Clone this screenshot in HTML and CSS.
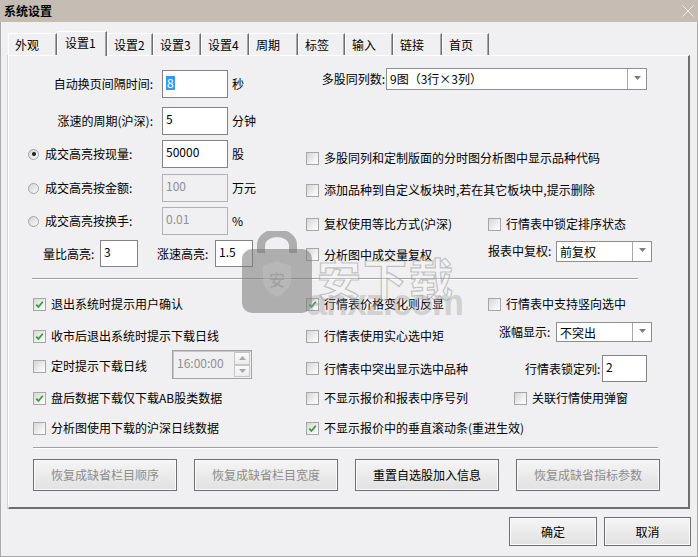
FILE: index.html
```html
<!DOCTYPE html>
<html lang="zh-CN">
<head>
<meta charset="utf-8">
<title>系统设置</title>
<link rel="stylesheet" href="styles.css">
</head>
<body>
<div class="window">
  <div class="titlebar">
    <span class="title">系统设置</span>
    <svg class="close" width="12" height="12" viewBox="0 0 12 12"><path d="M0.5 0.5 L11.5 11.5 M11.5 0.5 L0.5 11.5" stroke="#efebe6" stroke-width="1" fill="none"/></svg>
  </div>
  <div class="client">
    <div class="tabs">
      <div class="tab w49">外观</div>
      <div class="tab sel w50">设置1</div>
      <div class="tab w46">设置2</div>
      <div class="tab w48">设置3</div>
      <div class="tab w48">设置4</div>
      <div class="tab w49">周期</div>
      <div class="tab w47">标签</div>
      <div class="tab w48">输入</div>
      <div class="tab w49">链接</div>
      <div class="tab w47">首页</div>
    </div>
    <div class="panel">
      <div class="top">
        <div class="lcol">
          <div class="lrow r1">
            <div class="lab-r">自动换页间隔时间:</div>
            <div class="inp w66"><span class="hl">8</span></div>
            <div class="unit">秒</div>
          </div>
          <div class="lrow r2">
            <div class="lab-r">涨速的周期(沪深):</div>
            <div class="inp w66">5</div>
            <div class="unit">分钟</div>
          </div>
          <div class="lrow r3">
            <div class="lead"><span class="radio on"></span><span class="rlab">成交高亮按现量:</span></div>
            <div class="inp w66">50000</div>
            <div class="unit">股</div>
          </div>
          <div class="lrow r4">
            <div class="lead"><span class="radio"></span><span class="rlab">成交高亮按金额:</span></div>
            <div class="inp w66 dis">100</div>
            <div class="unit">万元</div>
          </div>
          <div class="lrow r5">
            <div class="lead"><span class="radio"></span><span class="rlab">成交高亮按换手:</span></div>
            <div class="inp w66 dis">0.01</div>
            <div class="unit">%</div>
          </div>
          <div class="lrow r6">
            <div class="lab6a">量比高亮:</div>
            <div class="inp w38">3</div>
            <div class="lab6b">涨速高亮:</div>
            <div class="inp w38">1.5</div>
          </div>
        </div>
        <div class="rcol">
          <div class="rrow q1">
            <div class="lab-q">多股同列数:</div>
            <div class="combo cw261"><span class="val">9图（3行×3列）</span><span class="arr"><svg width="7" height="5" viewBox="0 0 7 5"><path d="M0 0 H7 L3.5 4 Z" fill="#7e7e7e"/></svg></span></div>
          </div>
          <div class="rrow q2">
            <label class="cb"><span class="box"></span>多股同列和定制版面的分时图分析图中显示品种代码</label>
          </div>
          <div class="rrow q3">
            <label class="cb"><span class="box"></span>添加品种到自定义板块时,若在其它板块中,提示删除</label>
          </div>
          <div class="rrow q4">
            <div class="rc1"><label class="cb"><span class="box"></span>复权使用等比方式(沪深)</label></div>
            <div class="rc2"><label class="cb"><span class="box"></span>行情表中锁定排序状态</label></div>
          </div>
          <div class="rrow q5">
            <div class="rc1 low"><label class="cb"><span class="box"></span>分析图中成交量复权</label></div>
            <div class="rc2">
              <span class="lab-fq">报表中复权:</span>
              <div class="combo cw96 ch21"><span class="val">前复权</span><span class="arr"><svg width="7" height="5" viewBox="0 0 7 5"><path d="M0 0 H7 L3.5 4 Z" fill="#7e7e7e"/></svg></span></div>
            </div>
          </div>
        </div>
      </div>

      <div class="sep sep1"></div>

      <div class="lower">
        <div class="brow ra">
          <div class="c1"><label class="cb"><span class="box on"><svg width="11" height="11" viewBox="0 0 11 11"><path d="M2.3 5.6 L4.4 8 L8.8 2.8" stroke="#2e9b2e" stroke-width="1.7" fill="none"/></svg></span>退出系统时提示用户确认</label></div>
          <div class="c2"><label class="cb"><span class="box on"><svg width="11" height="11" viewBox="0 0 11 11"><path d="M2.3 5.6 L4.4 8 L8.8 2.8" stroke="#2e9b2e" stroke-width="1.7" fill="none"/></svg></span>行情表价格变化则反显</label></div>
          <div class="c3"><label class="cb"><span class="box"></span>行情表中支持竖向选中</label></div>
        </div>
        <div class="brow rb">
          <div class="c1"><label class="cb"><span class="box on"><svg width="11" height="11" viewBox="0 0 11 11"><path d="M2.3 5.6 L4.4 8 L8.8 2.8" stroke="#2e9b2e" stroke-width="1.7" fill="none"/></svg></span>收市后退出系统时提示下载日线</label></div>
          <div class="c2"><label class="cb"><span class="box"></span>行情表使用实心选中矩</label></div>
          <div class="c3 zf">
            <span class="lab-zf">涨幅显示:</span>
            <div class="combo cw96 ch20 up"><span class="val">不突出</span><span class="arr"><svg width="7" height="5" viewBox="0 0 7 5"><path d="M0 0 H7 L3.5 4 Z" fill="#7e7e7e"/></svg></span></div>
          </div>
        </div>
        <div class="brow rc">
          <div class="c1">
            <label class="cb wfix"><span class="box"></span>定时提示下载日线</label>
            <div class="spin">
              <span class="sv">16:00:00</span>
              <span class="sbtns">
                <span class="sb"><svg width="7" height="4" viewBox="0 0 7 4"><path d="M0 4 H7 L3.5 0 Z" fill="#a8a8a8"/></svg></span>
                <span class="sb"><svg width="7" height="4" viewBox="0 0 7 4"><path d="M0 0 H7 L3.5 4 Z" fill="#a8a8a8"/></svg></span>
              </span>
            </div>
          </div>
          <div class="c2 dn"><label class="cb"><span class="box"></span>行情表中突出显示选中品种</label></div>
          <div class="c3 lk">
            <span class="lab-lk">行情表锁定列:</span>
            <div class="inp w45 h27">2</div>
          </div>
        </div>
        <div class="brow rd">
          <div class="c1"><label class="cb"><span class="box on"><svg width="11" height="11" viewBox="0 0 11 11"><path d="M2.3 5.6 L4.4 8 L8.8 2.8" stroke="#2e9b2e" stroke-width="1.7" fill="none"/></svg></span>盘后数据下载仅下载AB股类数据</label></div>
          <div class="c2"><label class="cb"><span class="box"></span>不显示报价和报表中序号列</label></div>
          <div class="c3 gl"><label class="cb"><span class="box"></span>关联行情使用弹窗</label></div>
        </div>
        <div class="brow re">
          <div class="c1"><label class="cb"><span class="box"></span>分析图使用下载的沪深日线数据</label></div>
          <div class="c2"><label class="cb"><span class="box on"><svg width="11" height="11" viewBox="0 0 11 11"><path d="M2.3 5.6 L4.4 8 L8.8 2.8" stroke="#2e9b2e" stroke-width="1.7" fill="none"/></svg></span>不显示报价中的垂直滚动条(重进生效)</label></div>
        </div>
      </div>

      <div class="sep sep2"></div>

      <div class="btnrow">
        <div class="btn dis">恢复成缺省栏目顺序</div>
        <div class="btn dis">恢复成缺省栏目宽度</div>
        <div class="btn">重置自选股加入信息</div>
        <div class="btn dis">恢复成缺省指标参数</div>
      </div>
    </div>
    <div class="footer">
      <div class="fbtn w88">确定</div>
      <div class="fbtn w87">取消</div>
    </div>
  </div>

  <div class="watermark" aria-hidden="true">
    <svg class="bag" width="72" height="84" viewBox="0 0 72 84">
      <path d="M20 22 V14 A16 12 0 0 1 52 14 V22" stroke="rgba(120,120,120,0.55)" stroke-width="8" fill="none"/>
      <rect x="1" y="18" width="70" height="64" rx="10" fill="rgba(120,120,120,0.55)"/>
      <path d="M36 30 L50 35 V48 C50 57 43 63 36 66 C29 63 22 57 22 48 V35 Z" fill="rgba(200,200,200,0.35)"/>
      <text x="36" y="55" font-size="16" text-anchor="middle" fill="rgba(140,140,140,0.6)" font-family="Noto Sans CJK SC, sans-serif">安</text>
    </svg>
    <span class="wm-cn">安下载</span>
    <span class="wm-en">anxz.com</span>
  </div>
</div>
</body>
</html>
```

FILE: styles.css
```css
* { box-sizing: border-box; }

body {
  margin: 0;
  font-family: "Noto Sans CJK SC", "Noto Sans", sans-serif;
  font-size: 12px;
  color: #000;
  background: #f0eff1;
}

.window {
  position: relative;
  width: 698px;
  height: 557px;
  overflow: hidden;
  background: #f0eff1;
}

/* title bar */
.titlebar {
  height: 22px;
  background: #c5bdb4;
  display: flex;
  align-items: center;
  justify-content: space-between;
  padding: 0 4px 0 4px;
}
.title {
  font-weight: bold;
  font-size: 12px;
  line-height: 22px;
}
.close { display: block; margin-top: -1px; }

/* client */
.client {
  height: 535px;
  border-left: 1px solid #a9a9a9;
  border-right: 1px solid #a9a9a9;
  border-bottom: 1px solid #a9a9a9;
}

/* tabs */
.tabs {
  display: flex;
  align-items: flex-end;
  height: 33px;
  padding-left: 7px;
}
.tab {
  height: 22px;
  border-top: 1px solid #ffffff;
  border-left: 1px solid #ffffff;
  border-right: 1px solid #6e6e6e;
  box-shadow: inset -1px 0 0 #a7a7a7;
  padding: 1px 0 0 6px;
  line-height: 20px;
  white-space: nowrap;
  background: #f0eff1;
}
.tab.sel {
  position: relative;
  z-index: 1;
  height: 25px;
  margin-bottom: -1px;
  padding: 2px 0 0 7px;
  line-height: 18px;
}
.w46 { width: 46px; }
.w47 { width: 47px; }
.w48 { width: 48px; }
.w49 { width: 49px; }
.w50 { width: 50px; }

/* panel */
.panel {
  width: 682px;
  height: 454px;
  margin-left: 7px;
  border-top: 1px solid #ffffff;
  border-left: 1px solid #ffffff;
  border-right: 2px solid #6f6f6f;
  border-bottom: 2px solid #6f6f6f;
  box-shadow: -1px 0 0 #d2d2d2;
  line-height: 16px;
}

.top {
  display: flex;
  margin-top: 12px;
}
.lcol {
  width: 297px;
  padding-top: 2px;
}
.rcol { flex: 1; }

.lrow {
  display: flex;
  align-items: center;
  height: 28px;
}
.lrow.r2 { margin-top: 9px; }
.lrow.r3 { margin-top: 5px; }
.lrow.r4 { margin-top: 6px; }
.lrow.r5 { margin-top: 5px; }
.lrow.r6 { margin-top: 5px; height: 27px; padding-left: 34px; }

.lab-r {
  width: 153px;
  padding-right: 9px;
  text-align: right;
  white-space: nowrap;
}
.lead {
  width: 153px;
  padding-left: 19px;
  display: flex;
  align-items: center;
  white-space: nowrap;
}
.rlab { margin-left: 6px; }
.unit { margin-left: 4px; white-space: nowrap; }
.lab6a { width: 57px; white-space: nowrap; }
.lab6b { width: 58px; margin-left: 19px; white-space: nowrap; }

/* radio */
.radio {
  flex: none;
  position: relative;
  width: 11px;
  height: 11px;
  border-radius: 50%;
  border: 1px solid #a2a2a2;
  background: linear-gradient(135deg, #d3d3d3, #fbfbfb);
}
.radio.on::after {
  content: "";
  position: absolute;
  left: 2.5px;
  top: 2.5px;
  width: 4px;
  height: 4px;
  border-radius: 50%;
  background: #1c1c1c;
}

/* edit boxes */
.inp {
  height: 28px;
  border: 1px solid #838383;
  background: #ffffff;
  padding: 3px 3px 0 3px;
  line-height: 16px;
  white-space: nowrap;
}
.inp.dis {
  border-color: #b2b2b2;
  background: #f0eff1;
  color: #8f8f8f;
}
.w66 { width: 66px; }
.w38 { width: 38px; height: 27px; }
.w45 { width: 45px; }
.h27 { height: 27px; }
.hl {
  display: inline-block;
  background: #3399ff;
  color: #fff;
  line-height: 14px;
  padding: 0 1px;
  margin-top: 2px;
}

/* right column */
.rrow {
  display: flex;
  align-items: center;
  height: 22px;
}
.rrow.q2 { margin-top: 57px; }
.rrow.q3 { margin-top: 10px; }
.rrow.q4 { margin-top: 12px; }
.rrow.q5 { margin-top: 5px; }
.lab-q {
  width: 80px;
  text-align: right;
  white-space: nowrap;
  padding-right: 1px;
}
.rc1 { width: 182px; display: flex; align-items: center; }
.rc1.low { padding-top: 7px; }
.rc2 { flex: 1; display: flex; align-items: center; }
.lab-fq { width: 68px; white-space: nowrap; }

/* combo */
.combo {
  display: flex;
  height: 22px;
  border: 1px solid #8e8e8e;
  background: #ffffff;
}
.combo .val {
  flex: 1;
  padding-left: 3px;
  line-height: 19px;
  white-space: nowrap;
}
.combo .arr {
  width: 19px;
  border-left: 1px solid #a9a9a9;
  display: flex;
  align-items: center;
  justify-content: center;
  padding-bottom: 2px;
}
.cw261 { width: 261px; }
.cw96 { width: 96px; }
.ch21 { height: 21px; }
.ch20 { height: 20px; }
.combo.up { margin-bottom: 8px; }

/* checkbox */
.cb {
  display: flex;
  align-items: center;
  white-space: nowrap;
  line-height: 16px;
}
.box {
  flex: none;
  width: 13px;
  height: 13px;
  margin-right: 5px;
  border: 1px solid #a6a6a6;
  background: linear-gradient(135deg, #d6d6d6 0%, #f4f4f4 70%, #fcfcfc 100%);
  display: flex;
  align-items: center;
  justify-content: center;
}
.box svg { display: block; }

/* separators */
.sep {
  height: 2px;
  border-top: 1px solid #a0a0a0;
  border-bottom: 1px solid #ffffff;
}
.sep1 { margin: 11px 0 0 23px; width: 606px; }
.sep2 { margin: 9px 0 0 24px; width: 625px; }

/* lower section */
.brow {
  display: flex;
  align-items: center;
  height: 20px;
}
.brow.ra { margin-top: 14px; }
.brow.rb { margin-top: 12px; }
.brow.rc { margin-top: 4px; height: 32px; }
.brow.rd { margin-top: 6px; }
.brow.re { margin-top: 10px; }
.c1 {
  width: 297px;
  height: 100%;
  padding-left: 24px;
  display: flex;
  align-items: center;
}
.c2 {
  width: 182px;
  height: 100%;
  display: flex;
  align-items: center;
}
.c2.dn { padding-top: 5px; }
.c3 {
  flex: 1;
  height: 100%;
  display: flex;
  align-items: center;
}
.c3.zf { padding-left: 11px; }
.c3.lk { padding-left: 37px; align-items: flex-end; }
.c3.gl { padding-left: 26px; }
.lab-zf { width: 57px; white-space: nowrap; margin-bottom: 8px; }
.lab-lk { width: 77px; white-space: nowrap; line-height: 27px; }
.wfix { width: 139px; }

/* spin box */
.spin {
  align-self: flex-start;
  width: 80px;
  height: 29px;
  display: flex;
  border: 1px solid #a3a3a3;
  box-shadow: inset 1px 1px 0 #c8c8c8;
  background: #f0eff1;
}
.spin .sv {
  flex: 1;
  padding: 4px 0 0 4px;
  line-height: 16px;
  color: #8f8f8f;
  white-space: nowrap;
}
.spin .sbtns {
  width: 17px;
  display: flex;
  flex-direction: column;
  padding: 1px 1px 1px 0;
}
.spin .sb {
  flex: 1;
  display: flex;
  align-items: center;
  justify-content: center;
  border: 1px solid #c6c6c6;
  background: linear-gradient(#fafafa, #ececec);
}

/* buttons */
.btnrow {
  display: flex;
  gap: 17px;
  margin-top: 10px;
  padding-left: 24px;
}
.btn {
  width: 144px;
  height: 32px;
  border: 1px solid #6f6f6f;
  background: linear-gradient(#f5f5f5, #e1e1e1);
  box-shadow: inset 0 0 0 1px #fbfbfb;
  display: flex;
  align-items: center;
  justify-content: center;
  white-space: nowrap;
}
.btn.dis { color: #8d8d8d; }

.footer {
  display: flex;
  justify-content: flex-end;
  gap: 7px;
  margin-top: 8px;
  padding-right: 6px;
}
.fbtn {
  height: 29px;
  border: 1px solid #6f6f6f;
  background: linear-gradient(#f5f5f5, #e1e1e1);
  box-shadow: inset 0 0 0 1px #fbfbfb;
  display: flex;
  align-items: center;
  justify-content: center;
}
.w88 { width: 88px; }
.w87 { width: 87px; }

/* watermark overlay */
.watermark {
  position: absolute;
  left: 241px;
  top: 231px;
  width: 230px;
  height: 92px;
  pointer-events: none;
}
.watermark .bag {
  position: absolute;
  left: 0;
  top: 0;
}
.wm-cn {
  position: absolute;
  left: 76px;
  top: 22px;
  font-size: 44px;
  line-height: 48px;
  font-weight: bold;
  color: rgba(255, 255, 255, 0.3);
  -webkit-text-stroke: 1.2px rgba(150, 150, 150, 0.55);
  letter-spacing: 2px;
  white-space: nowrap;
}
.wm-en {
  position: absolute;
  left: 66px;
  top: 54px;
  font-family: "Liberation Sans", sans-serif;
  font-size: 36px;
  line-height: 36px;
  font-weight: bold;
  color: rgba(160, 160, 160, 0.4);
  letter-spacing: -1px;
  white-space: nowrap;
}
```
